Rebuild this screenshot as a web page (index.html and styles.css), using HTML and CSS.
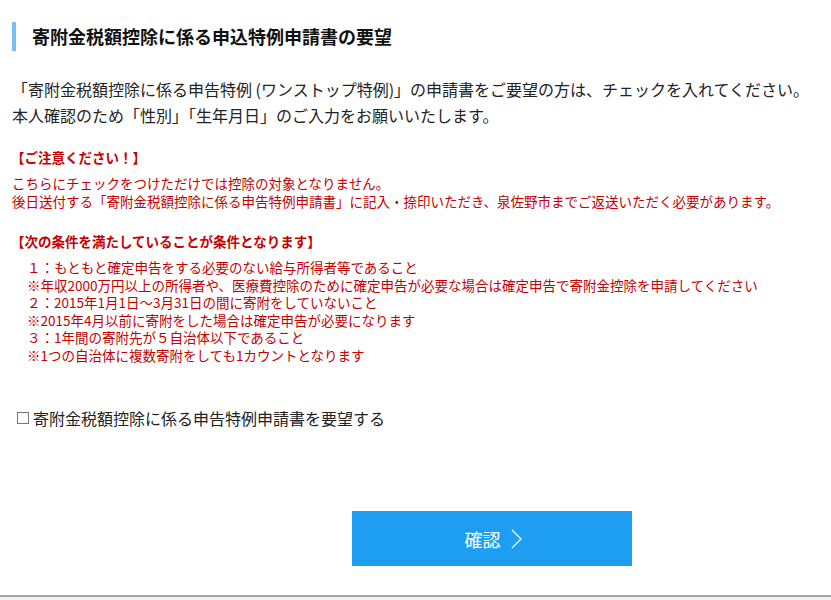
FILE: index.html
```html
<!DOCTYPE html>
<html lang="ja">
<head>
    <meta charset="UTF-8">
    <meta name="viewport" content="width=device-width, initial-scale=1.0">
    <title>寄附金税額控除に係る申込特例申請書の要望</title>
    <link rel="stylesheet" href="styles.css">
</head>
<body>
    <div class="content">
        <h2 class="title">寄附金税額控除に係る申込特例申請書の要望</h2>

        <p class="intro">
            「寄附金税額控除に係る申告特例 (ワンストップ特例)」の申請書をご要望の方は、チェックを入れてください。<br>
            本人確認のため「性別」「生年月日」のご入力をお願いいたします。
        </p>

        <div class="notice">
            <h3 class="notice-title">【ご注意ください！】</h3>
            <p>こちらにチェックをつけただけでは控除の対象となりません。<br>
            後日送付する「寄附金税額控除に係る申告特例申請書」に記入・捺印いただき、泉佐野市までご返送いただく必要があります。</p>
        </div>

        <div class="notice">
            <h3 class="notice-title">【次の条件を満たしていることが条件となります】</h3>
            <ul class="conditions">
                <li>１：もともと確定申告をする必要のない給与所得者等であること</li>
                <li>※年収2000万円以上の所得者や、医療費控除のために確定申告が必要な場合は確定申告で寄附金控除を申請してください</li>
                <li>２：2015年1月1日～3月31日の間に寄附をしていないこと</li>
                <li>※2015年4月以前に寄附をした場合は確定申告が必要になります</li>
                <li>３：1年間の寄附先が５自治体以下であること</li>
                <li>※1つの自治体に複数寄附をしても1カウントとなります</li>
            </ul>
        </div>

        <label class="request">
            <input type="checkbox" name="request">
            <span>寄附金税額控除に係る申告特例申請書を要望する</span>
        </label>

        <div class="actions">
            <button class="confirm">確認
                <svg width="11" height="20" viewBox="0 0 11 20"><path d="M1 1 L10 10 L1 19" fill="none" stroke="#fff" stroke-width="1.2"/></svg>
            </button>
        </div>
    </div>
    <div class="footer"></div>
</body>
</html>
```

FILE: styles.css
```css
/* Reset */
* {
    margin: 0;
    padding: 0;
    box-sizing: border-box;
}

body {
    font-family: "Noto Sans CJK JP", "Noto Sans", sans-serif;
    color: #222;
    background: #fff;
}

.content {
    padding: 22px 12px 0 12px;
}

/* Heading with blue bar */
.title {
    border-left: 4px solid #7dbff0;
    padding-left: 16px;
    height: 29px;
    line-height: 29px;
    font-size: 18px;
    font-weight: bold;
    color: #111;
}

.intro {
    margin-top: 25px;
    font-size: 16px;
    line-height: 26px;
    color: #222;
}

/* Red notice blocks */
.notice {
    margin-top: 20px;
    color: #c40000;
    font-size: 13.5px;
    line-height: 17.5px;
}

.notice + .notice {
    margin-top: 22px;
}

.notice-title {
    font-size: 13.5px;
    font-weight: bold;
    line-height: 18px;
    margin-bottom: 9px;
    margin-left: -1px;
}

.conditions {
    list-style: none;
    padding-left: 15px;
}

/* Checkbox row */
.request {
    display: flex;
    align-items: center;
    gap: 4px;
    margin-top: 44px;
    margin-left: 5px;
    font-size: 16px;
    line-height: 20px;
    color: #222;
}

.request input {
    appearance: none;
    -webkit-appearance: none;
    width: 12px;
    height: 12px;
    border: 1px solid #777;
    background: #fff;
    margin: 0;
}

.request input:checked {
    background: #1e9ef0;
}

/* Confirm button */
.actions {
    display: flex;
    margin-top: 83px;
    margin-bottom: 29px;
    padding-left: 340px;
}

.confirm {
    display: flex;
    align-items: center;
    justify-content: center;
    gap: 10px;
    width: 280px;
    height: 55px;
    border: none;
    background-color: #1e9ef1;
    color: #fff;
    font-family: inherit;
    font-size: 18px;
    cursor: pointer;
    padding-left: 2px;
}

.confirm:hover {
    filter: brightness(1.1);
}

.footer {
    border-top: 2px solid #a6a6a6;
    background: #f0f0f0;
    height: 5px;
}
```
